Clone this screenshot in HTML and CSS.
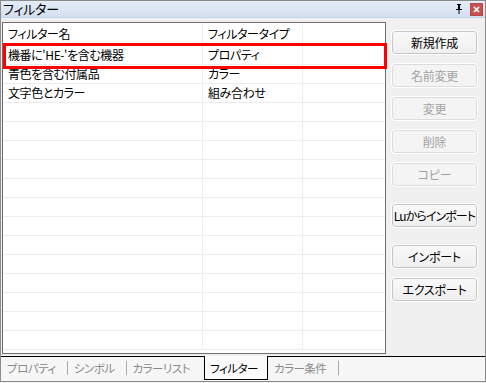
FILE: index.html
```html
<!DOCTYPE html>
<html lang="ja">
<head>
<meta charset="utf-8">
<title>フィルター</title>
<link rel="stylesheet" href="styles.css">
</head>
<body>
<div class="window">
  <div class="titlebar">
    <span class="title">フィルター</span>
    <svg class="pin" width="8" height="10" viewBox="0 0 8 10"><path d="M2 0h4v1H5v4h2v1H4.5v4h-1V6H1V5h2V1H2z" fill="#000"/><rect x="4" y="1" width="1" height="4" fill="#000"/></svg>
    <span class="close"><svg width="11" height="11" viewBox="0 0 11 11"><path d="M3 3l5 5M8 3l-5 5" stroke="#fff" stroke-width="1.7"/></svg></span>
  </div>
  <div class="main">
    <div class="grid">
      <div class="rows">
        <div class="row head"><div class="c1">フィルター名</div><div class="c2">フィルタータイプ</div><div class="c3"></div></div>
        <div class="row"><div class="c1">機番に'HE-'を含む機器</div><div class="c2">プロパティ</div><div class="c3"></div></div>
        <div class="row"><div class="c1">青色を含む付属品</div><div class="c2">カラー</div><div class="c3"></div></div>
        <div class="row"><div class="c1">文字色とカラー</div><div class="c2">組み合わせ</div><div class="c3"></div></div>
        <div class="row"><div class="c1"></div><div class="c2"></div><div class="c3"></div></div>
        <div class="row"><div class="c1"></div><div class="c2"></div><div class="c3"></div></div>
        <div class="row"><div class="c1"></div><div class="c2"></div><div class="c3"></div></div>
        <div class="row"><div class="c1"></div><div class="c2"></div><div class="c3"></div></div>
        <div class="row"><div class="c1"></div><div class="c2"></div><div class="c3"></div></div>
        <div class="row"><div class="c1"></div><div class="c2"></div><div class="c3"></div></div>
        <div class="row"><div class="c1"></div><div class="c2"></div><div class="c3"></div></div>
        <div class="row"><div class="c1"></div><div class="c2"></div><div class="c3"></div></div>
        <div class="row"><div class="c1"></div><div class="c2"></div><div class="c3"></div></div>
        <div class="row"><div class="c1"></div><div class="c2"></div><div class="c3"></div></div>
        <div class="row"><div class="c1"></div><div class="c2"></div><div class="c3"></div></div>
        <div class="row"><div class="c1"></div><div class="c2"></div><div class="c3"></div></div>
        <div class="row"><div class="c1"></div><div class="c2"></div><div class="c3"></div></div>
      </div>
      <div class="highlight"></div>
    </div>
    <div class="panel">
      <button class="btn">新規作成</button>
      <button class="btn disabled">名前変更</button>
      <button class="btn disabled">変更</button>
      <button class="btn disabled">削除</button>
      <button class="btn disabled">コピー</button>
      <button class="btn gap tight">Luからインポート</button>
      <button class="btn gap">インポート</button>
      <button class="btn">エクスポート</button>
    </div>
  </div>
  <div class="tabs">
    <span class="tab">プロパティ</span><span class="sep"></span>
    <span class="tab">シンボル</span><span class="sep"></span>
    <span class="tab">カラーリスト</span>
    <span class="tab active">フィルター</span>
    <span class="tab">カラー条件</span><span class="sep last"></span>
  </div>
</div>
</body>
</html>
```

FILE: styles.css
```css
* { box-sizing: border-box; }
html, body { margin: 0; padding: 0; background: #f0f0f0; }
body {
  font-family: "Noto Sans CJK JP", "Noto Sans", sans-serif;
  font-size: 12px;
  font-feature-settings: "palt";
  letter-spacing: -0.4px;
  color: #000;
}
.window {
  width: 486px;
  height: 382px;
  border: 1px solid #8c8c8c;
  background: #f0f0f0;
  display: flex;
  flex-direction: column;
  overflow: hidden;
}
.titlebar {
  height: 17px;
  flex: none;
  display: flex;
  align-items: center;
  background: linear-gradient(#e4ecf7, #d3dff0);
  border-bottom: 1px solid #c5d3e6;
  padding-left: 2px;
}
.title { font-size: 13px; line-height: 16px; flex: 1; letter-spacing: -0.2px; }
.pin { flex: none; margin-right: 7px; display: block; }
.close {
  flex: none;
  width: 13px;
  height: 13px;
  margin-right: 2px;
  border: 1px solid #b84545;
  background: #c75050;
  box-shadow: inset 0 0 0 6px #c75050;
  display: flex;
  align-items: center;
  justify-content: center;
}
.close svg { display: block; }
.main {
  flex: 1;
  display: flex;
  padding: 4px 0 0 1px;
  min-height: 0;
}
.grid {
  width: 384px;
  height: 332px;
  border: 1px solid #6e6e6e;
  background: #fff;
  position: relative;
  flex: none;
}
.rows { width: 100%; height: 100%; overflow: hidden; }
.row {
  display: flex;
  height: 19px;
  border-bottom: 1px solid #ececec;
}
.row.head { height: 23px; }
.row > div {
  height: 100%;
  display: flex;
  align-items: center;
  padding-left: 5px;
  white-space: nowrap;
  line-height: 14px;
}
.c1 { width: 200px; border-right: 1px solid #ececec; }
.c2 { width: 100px; border-right: 1px solid #ececec; }
.c3 { width: 82px; }
.highlight {
  position: absolute;
  left: 0;
  top: 20px;
  width: 384px;
  height: 26px;
  border: 3px solid #f00;
}
.panel {
  flex: 1;
  display: flex;
  flex-direction: column;
  align-items: flex-start;
  padding: 9px 0 0 6px;
  gap: 10px;
}
.btn {
  width: 85px;
  height: 23px;
  border: 1px solid #c6c6c6;
  border-radius: 3px;
  background: linear-gradient(#f9f9f9, #efefef);
  outline: 1px solid #fff;
  font: inherit;
  font-size: 12px;
  color: #000;
  padding: 0;
  line-height: 14px;
  white-space: nowrap;
  letter-spacing: -0.2px;
}
.btn.tight { letter-spacing: -0.9px; }
.btn.disabled {
  color: #a3a3a3;
  border-color: #dcdcdc;
  background: #f4f4f4;
}
.btn.gap { margin-top: 8px; }
.tabs {
  flex: none;
  height: 25px;
  margin-top: 1px;
  border-top: 1px solid #000;
  background: #f6f6f6;
  display: flex;
  align-items: flex-start;
  padding-left: 6px;
}
.tab {
  color: #8a8a8a;
  font-size: 11.5px;
  height: 22px;
  line-height: 22px;
  white-space: nowrap;
  letter-spacing: -0.5px;
}
.sep {
  flex: none;
  width: 1px;
  height: 14px;
  background: #a8a8a8;
  margin: 4px 6px 0 11px;
}
.sep.last { margin-left: 12px; }
.tab.active {
  color: #000;
  background: #fafafa;
  border: 1px solid #000;
  border-top: none;
  margin: -1px 6px 0 14px;
  height: 24px;
  padding: 1px 9px 0 5px;
}
```
